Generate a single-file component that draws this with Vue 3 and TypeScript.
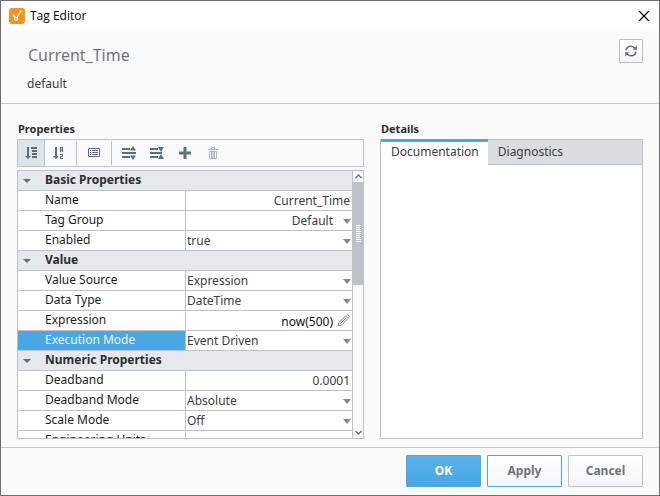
<script setup lang="ts">
import { ref } from 'vue'

type Kind = 'text' | 'select' | 'expression'

interface Property {
  id: string
  label: string
  value: string
  kind: Kind
  options?: string[]
  alignRight?: boolean
}

interface Group {
  title: string
  open: boolean
  items: Property[]
}

const groups = ref<Group[]>([
  {
    title: 'Basic Properties',
    open: true,
    items: [
      { id: 'name', label: 'Name', value: 'Current_Time', kind: 'text' },
      { id: 'tag-group', label: 'Tag Group', value: 'Default', kind: 'select', alignRight: true },
      { id: 'enabled', label: 'Enabled', value: 'true', kind: 'select', options: ['true', 'false'] },
    ],
  },
  {
    title: 'Value',
    open: true,
    items: [
      { id: 'value-source', label: 'Value Source', value: 'Expression', kind: 'select' },
      { id: 'data-type', label: 'Data Type', value: 'DateTime', kind: 'select' },
      { id: 'expression', label: 'Expression', value: 'now(500)', kind: 'expression' },
      { id: 'execution-mode', label: 'Execution Mode', value: 'Event Driven', kind: 'select' },
    ],
  },
  {
    title: 'Numeric Properties',
    open: true,
    items: [
      { id: 'deadband', label: 'Deadband', value: '0.0001', kind: 'text' },
      { id: 'deadband-mode', label: 'Deadband Mode', value: 'Absolute', kind: 'select' },
      { id: 'scale-mode', label: 'Scale Mode', value: 'Off', kind: 'select' },
      { id: 'engineering-units', label: 'Engineering Units', value: '', kind: 'text' },
    ],
  },
])

const selectedId = ref('execution-mode')
const tabs = ['Documentation', 'Diagnostics']
const activeTab = ref('Documentation')
const sortMode = ref<'category' | 'alpha'>('category')
</script>

<template>
  <main class="dialog">
    <header class="titlebar">
      <svg class="logo" width="16" height="16" viewBox="0 0 16 16" aria-hidden="true">
        <rect width="16" height="16" rx="3" fill="#f7941e" />
        <path d="M4.200 7l2 2.500M12 2.800L8 9.500" stroke="#fff" stroke-width="1.400" fill="none" stroke-linecap="round" />
        <circle cx="6.900" cy="10.900" r="1.500" stroke="#fff" stroke-width="1.300" fill="none" />
      </svg>
      <span class="title">Tag Editor</span>
      <button class="close" type="button" aria-label="Close">
        <svg width="12" height="12" viewBox="0 0 12 12"><path d="M1 1l10 10M11 1L1 11" stroke="#000" stroke-width="1.2" /></svg>
      </button>
    </header>

    <section class="heading">
      <div>
        <h1>Current_Time</h1>
        <p>default</p>
      </div>
      <button class="refresh" type="button" aria-label="Refresh">
        <svg width="12" height="12" viewBox="0 0 12 12" fill="none" stroke="#5b6f80" stroke-width="1.600">
          <path d="M1 5.2C1.6 2.6 3.6 1.2 6 1.2c1.7 0 3.1.8 4.1 2.2" />
          <path d="M11 6.8c-.6 2.6-2.6 4-5 4-1.7 0-3.1-.8-4.1-2.2" />
          <path d="M11.8.6v4.2H7.6zM.2 11.4V7.2h4.2z" fill="#5b6f80" stroke="none" />
        </svg>
      </button>
    </section>

    <div class="content">
      <section class="column">
        <h2>Properties</h2>
        <div class="toolbar" role="toolbar">
          <button type="button" class="tool first" :class="{ on: sortMode === 'category' }" aria-label="Sort by category" @click="sortMode = 'category'">
            <svg width="12" height="12" viewBox="0 0 12 12" fill="#5b6f80">
              <path d="M2 0h2v9h2l-3 3-3-3h2zM6 0h6v2H6zM7 3h5v2H7zM7 6h5v2H7zM7 9h5v2H7z" />
            </svg>
          </button>
          <button type="button" class="tool" :class="{ on: sortMode === 'alpha' }" aria-label="Sort alphabetically" @click="sortMode = 'alpha'">
            <svg width="12" height="12" viewBox="0 0 12 12" fill="#5b6f80">
              <path d="M2 0h2v9h2l-3 3-3-3h2z" />
              <path d="M7.500 5V.500h2V5M7.500 3h2M7 7.500h2.500V9l-2 1v1.500H10" fill="none" stroke="#5b6f80" stroke-width="1.200" />
            </svg>
          </button>
          <span class="divider"></span>
          <button type="button" class="tool" aria-label="Show description">
            <svg width="12" height="10" viewBox="0 0 12 10" fill="#5b6f80">
              <path d="M.5.5h11v8H.5z" fill="none" stroke="#5b6f80" />
              <path d="M2 2h1v1H2zM4 2h6v1H4zM2 4h1v1H2zM4 4h6v1H4zM2 6h1v1H2zM4 6h6v1H4z" />
            </svg>
          </button>
          <span class="divider"></span>
          <button type="button" class="tool" aria-label="Expand all">
            <svg width="14" height="14" viewBox="0 0 14 14" fill="#5b6f80">
              <path d="M0 2h8v2H0zM0 6h14v2H0zM0 10h8v2H0zM11 0L14 4.500H8zM8 9.500h6L11 14z" />
            </svg>
          </button>
          <button type="button" class="tool" aria-label="Collapse all">
            <svg width="14" height="14" viewBox="0 0 14 14" fill="#5b6f80">
              <path d="M0 2h8v2H0zM0 6h12v2H0zM0 10h8v2H0zM8 1h6l-3 5zM11 8l3 5H8z" />
            </svg>
          </button>
          <button type="button" class="tool" aria-label="Add">
            <svg width="12" height="12" viewBox="0 0 12 12" fill="#5b6f80"><path d="M4.500 0h3v4.500H12v3H7.500V12h-3V7.500H0v-3h4.500z" /></svg>
          </button>
          <button type="button" class="tool" aria-label="Delete" disabled>
            <svg width="10" height="12" viewBox="0 0 10 12" fill="none" stroke="#a9b2ba">
              <path d="M0 2.500h10M3.500 2V.5h3V2M1.500 4.500v7h7v-7zM3.500 5v6M5 5v6M6.500 5v6" />
            </svg>
          </button>
        </div>

        <div class="grid-box">
          <div class="scroll">
            <table>
              <colgroup>
                <col class="label-col" />
                <col />
              </colgroup>
              <tbody v-for="group in groups" :key="group.title">
                <tr class="group">
                  <th colspan="2">
                    <button type="button" :aria-expanded="group.open" @click="group.open = !group.open">
                      <svg width="8" height="4" viewBox="0 0 8 4" fill="#5b6f80"><path d="M0 0h8L4 4z" /></svg>
                      <span>{{ group.title }}</span>
                    </button>
                  </th>
                </tr>
                <template v-if="group.open">
                  <tr v-for="item in group.items" :key="item.id" :class="{ selected: item.id === selectedId }" @click="selectedId = item.id">
                    <th class="label"><label :for="item.id">{{ item.label }}</label></th>
                    <td>
                      <div class="field">
                        <template v-if="item.kind === 'select'">
                          <select :id="item.id" v-model="item.value" :class="{ right: item.alignRight }">
                            <option v-for="option in item.options ?? [item.value]" :key="option">{{ option }}</option>
                          </select>
                          <svg class="arrow" width="8" height="5" viewBox="0 0 8 5" fill="#7f8c98"><path d="M0 0h8L4 5z" /></svg>
                        </template>
                        <template v-else>
                          <input :id="item.id" v-model="item.value" type="text" :class="item.kind" />
                          <button v-if="item.kind === 'expression'" class="edit" type="button" aria-label="Edit expression">
                            <svg width="13" height="13" viewBox="0 0 13 13" fill="none" stroke="#7f8c98">
                              <path d="M1 12l1-3.500L8.500 2l2.500 2.500L4.500 11zM3.500 9.500l5.500-5.500M9.500 1.500l1-1 2 2-1 1" />
                            </svg>
                          </button>
                        </template>
                      </div>
                    </td>
                  </tr>
                </template>
              </tbody>
            </table>
          </div>
          <div class="scrollbar" aria-hidden="true">
            <span class="step"><svg width="7" height="5" viewBox="0 0 7 5"><path d="M.5 4l3-3 3 3" fill="none" stroke="#5b6f80" stroke-width="1.400" /></svg></span>
            <span class="track"><span class="thumb"><span class="grip"></span></span></span>
            <span class="step"><svg width="7" height="5" viewBox="0 0 7 5"><path d="M.5 1l3 3 3-3" fill="none" stroke="#5b6f80" stroke-width="1.400" /></svg></span>
          </div>
        </div>
      </section>

      <section class="column">
        <h2>Details</h2>
        <div class="details">
          <div class="tabs" role="tablist">
            <button v-for="tab in tabs" :key="tab" type="button" role="tab" :aria-selected="tab === activeTab" :class="{ active: tab === activeTab }" @click="activeTab = tab">{{ tab }}</button>
            <span class="filler"></span>
          </div>
          <div class="panel" role="tabpanel"></div>
        </div>
      </section>
    </div>

    <footer class="actions">
      <button type="button" class="primary">OK</button>
      <button type="button" class="apply">Apply</button>
      <button type="button">Cancel</button>
    </footer>
  </main>
</template>

<style>
body {
  margin: 0;
}
</style>

<style scoped>
.dialog,
.dialog * {
  box-sizing: border-box;
}

.dialog {
  display: flex;
  flex-direction: column;
  height: 100vh;
  border: 1px solid #6e6e6e;
  background: #fafafa;
  color: #3c3c3c;
  font: 12px/16px "Noto Sans", sans-serif;
}

button,
input,
select {
  margin: 0;
  padding: 0;
  border: 0;
  border-radius: 0;
  background: none;
  color: inherit;
  font: inherit;
  outline: none;
}

svg {
  display: block;
  flex: none;
}

h1,
h2,
p {
  margin: 0;
}

.titlebar {
  display: flex;
  flex: none;
  align-items: center;
  gap: 5px;
  height: 30px;
  padding: 0 8px;
  background: #fff;
  color: #000;
}

.title {
  flex: 1;
  font-family: "Open Sans", sans-serif;
}

.close {
  padding: 1px;
}

.heading {
  display: flex;
  flex: none;
  align-items: flex-start;
  justify-content: space-between;
  height: 73px;
  padding: 8px 16px 0 26px;
  border-bottom: 1px solid #c2c5c9;
}

h1 {
  padding: 4px 0 0 1px;
  color: #6f777d;
  font-size: 16px;
  font-weight: 400;
  line-height: 24px;
}

.heading p {
  padding-top: 9px;
}

.refresh {
  display: grid;
  place-items: center;
  width: 24px;
  height: 24px;
  border: 1px solid #b9bfc5;
  border-radius: 1px;
  background: linear-gradient(#fff, #f2f5f8);
}

.content {
  display: grid;
  flex: 1;
  grid-template-columns: 347fr 263fr;
  gap: 16px;
  min-height: 0;
  padding: 17px 16px 8px;
}

.column {
  display: flex;
  flex-direction: column;
  min-width: 0;
  min-height: 0;
}

h2 {
  padding: 0 0 2px 1px;
  color: #2e2e2e;
  font-size: 11px;
  font-weight: 700;
  line-height: 16px;
}

.toolbar {
  display: flex;
  flex: none;
  height: 28px;
  margin-bottom: 3px;
  border: 1px solid #bcc2c7;
}

.tool {
  display: grid;
  place-items: center;
  width: 28px;
}

.tool.first {
  width: 27px;
}

.tool.on {
  border-right: 1px solid #bcc2c7;
  background: #dce4ea;
}

.divider {
  width: 1px;
  margin: 1px 3px;
  background: #bcc2c7;
}

.grid-box {
  display: flex;
  flex: 1;
  min-height: 0;
  border: 1px solid #bcc2c7;
  background: #fff;
}

.scroll {
  flex: 1;
  overflow-y: auto;
  scrollbar-width: none;
}

table {
  width: 100%;
  border-spacing: 0;
  table-layout: fixed;
}

.label-col {
  width: 168px;
}

th,
td {
  height: 20px;
  padding: 0;
  border-bottom: 1px solid #bcc2c7;
  font-weight: 400;
  text-align: left;
}

.group th {
  background: #e5e9ee;
}

.group button {
  display: flex;
  align-items: center;
  gap: 14px;
  width: 100%;
  height: 19px;
  padding-left: 5px;
  color: #2e2e2e;
  font-weight: 700;
}

.group span {
  height: 18px;
}

.label {
  border-right: 1px solid #bcc2c7;
  color: #1c1c1c;
}

.label label {
  display: block;
  height: 19px;
  padding-left: 27px;
  line-height: 18px;
}

.selected .label {
  background: #48a8e6;
  color: #eaf5fc;
}

.field {
  display: flex;
  align-items: center;
  height: 19px;
}

.field select,
.field input {
  flex: 1;
  width: 0;
  min-width: 0;
  height: 19px;
}

.field select {
  padding: 1px 9px 0 1px;
  appearance: none;
}

.field select.right {
  padding-right: 10px;
  text-align-last: right;
}

.field input {
  padding: 0 2px 1px 0;
  text-align: right;
}

.field input.expression {
  padding: 1px 4px 0 0;
  color: #111;
}

.arrow {
  margin-top: 2px;
  margin-right: 1px;
  pointer-events: none;
}

.edit {
  margin-right: 2px;
}

.scrollbar {
  display: flex;
  flex-direction: column;
  width: 11px;
  border-left: 1px solid #bcc2c7;
  background: #fafafa;
}

.step {
  display: grid;
  flex: none;
  place-items: center;
  height: 11px;
}

.track {
  flex: 1;
}

.thumb {
  display: grid;
  place-items: center;
  height: 42%;
  background: #bcc2c7;
}

.grip {
  width: 5px;
  height: 17px;
  background: repeating-linear-gradient(#fff 0 1px, #bcc2c7 1px 2px);
}

.details {
  display: flex;
  flex: 1;
  flex-direction: column;
  border: 1px solid #bcc2c7;
  border-top: 0;
  background: #fff;
}

.tabs {
  display: flex;
  flex: none;
  height: 26px;
}

.tabs button {
  padding: 0 10px;
}

.tabs button,
.filler {
  border-top: 1px solid #bcc2c7;
  border-bottom: 1px solid #bcc2c7;
  background: #d9dde0;
}

.tabs button.active {
  padding: 0 9px 3px 10px;
  border-top: 3px solid #48a8e6;
  border-bottom: 0;
  background: #fff;
}

.filler {
  flex: 1;
}

.panel {
  flex: 1;
}

.actions {
  display: flex;
  flex: none;
  justify-content: flex-end;
  gap: 6px;
  padding: 7px 16px 8px;
  border-top: 1px solid #c2c5c9;
}

.actions button {
  width: 75px;
  height: 32px;
  border: 1px solid #bfc2c5;
  border-radius: 1px;
  background: linear-gradient(#fff, #f3f6f9);
  color: #6f7477;
  font-weight: 700;
}

.actions .apply {
  border-color: #48a8e6;
}

.actions .primary {
  border-color: #48a8e6;
  background: linear-gradient(#5cb1e9, #45a6e5);
  color: #fff;
}
</style>
